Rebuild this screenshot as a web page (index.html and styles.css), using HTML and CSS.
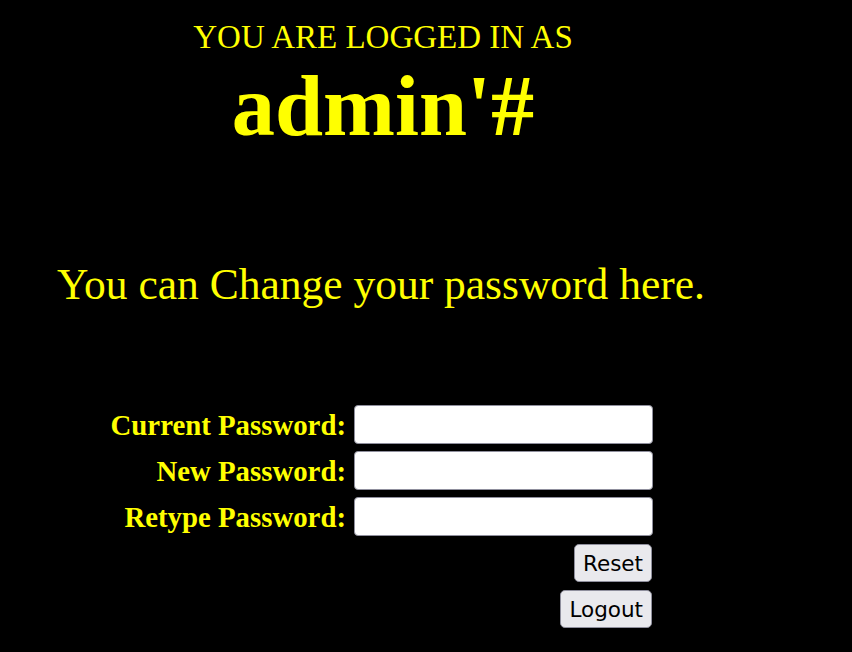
FILE: index.html
```html
<!DOCTYPE html>
<html lang="en">
<head>
    <meta charset="UTF-8">
    <meta name="viewport" content="width=device-width, initial-scale=1.0">
    <title>Change Password</title>
    <link rel="stylesheet" href="styles.css">
</head>
<body>
<div class="page">
    <div class="banner">
        <div class="logged">YOU ARE LOGGED IN AS</div>
        <div class="username">admin'#</div>
    </div>

    <p class="intro">You can Change your password here.</p>

    <form class="change-form" name="mylogin" method="POST" action="#">
        <div class="row">
            <label for="current">Current Password:</label>
            <input type="password" id="current" name="current_password">
        </div>
        <div class="row">
            <label for="newpass">New Password:</label>
            <input type="password" id="newpass" name="password">
        </div>
        <div class="row">
            <label for="retype">Retype Password:</label>
            <input type="password" id="retype" name="re_password">
        </div>
        <div class="actions">
            <button type="reset">Reset</button>
            <button type="button">Logout</button>
        </div>
    </form>
</div>
</body>
</html>
```

FILE: styles.css
```css
body {
    margin: 0;
    background: #000;
    color: #ffff00;
    font-family: "Liberation Serif", "Times New Roman", serif;
}

.page {
    width: 852px;
}

.banner {
    width: 766px;
    padding-top: 19px;
    text-align: center;
}

.logged {
    font-size: 33px;
    line-height: 36px;
}

.username {
    margin-top: 3px;
    font-size: 86.4px;
    font-weight: bold;
    line-height: 96px;
}

.intro {
    margin: 106px 0 0 57px;
    font-size: 43.5px;
    line-height: 48px;
}

.change-form {
    margin-top: 97px;
    width: 653px;
    display: flex;
    flex-direction: column;
    gap: 7px;
}

.row {
    display: flex;
    align-items: center;
    justify-content: flex-end;
    gap: 8px;
}

.row label {
    font-size: 28.8px;
    font-weight: bold;
    line-height: 32px;
}

.row input {
    box-sizing: border-box;
    width: 299px;
    height: 39px;
    margin: 0;
    border: 1.5px solid #8f8f9d;
    border-radius: 4px;
    background: #fff;
}

.actions {
    display: flex;
    flex-direction: column;
    align-items: flex-end;
    gap: 8px;
    margin-top: 1px;
}

.actions button {
    box-sizing: border-box;
    height: 38px;
    margin: 0 1px 0 0;
    padding: 0 8px;
    border: 1.5px solid #8f8f9d;
    border-radius: 5px;
    background: #e9e9ed;
    color: #000;
    font-family: "DejaVu Sans", Tahoma, sans-serif;
    font-size: 21.5px;
    cursor: pointer;
}
```
